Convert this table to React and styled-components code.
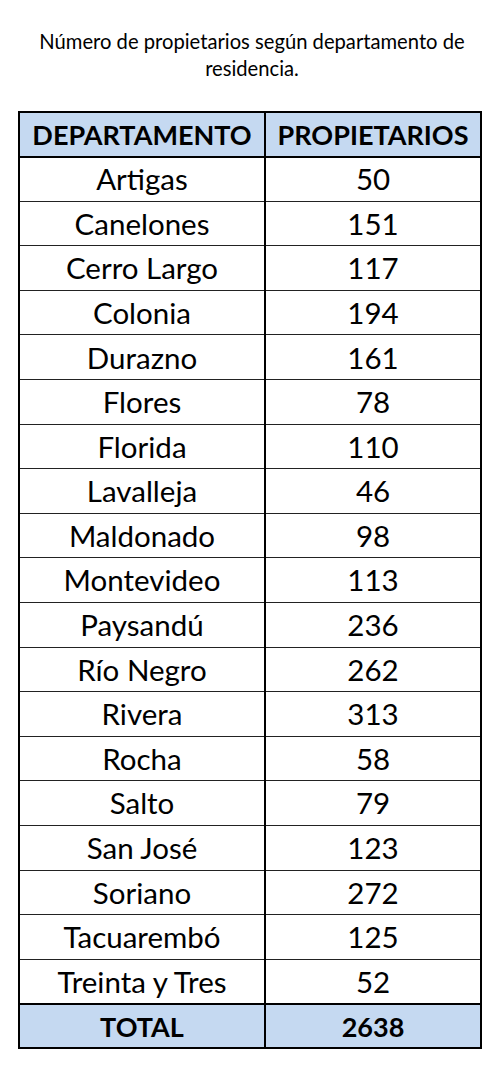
import React from 'react';
import styled, { createGlobalStyle } from 'styled-components';

const rows = [
  ['Artigas', 50],
  ['Canelones', 151],
  ['Cerro Largo', 117],
  ['Colonia', 194],
  ['Durazno', 161],
  ['Flores', 78],
  ['Florida', 110],
  ['Lavalleja', 46],
  ['Maldonado', 98],
  ['Montevideo', 113],
  ['Paysandú', 236],
  ['Río Negro', 262],
  ['Rivera', 313],
  ['Rocha', 58],
  ['Salto', 79],
  ['San José', 123],
  ['Soriano', 272],
  ['Tacuarembó', 125],
  ['Treinta y Tres', 52],
];

const GlobalStyle = createGlobalStyle`
  body {
    margin: 0;
    background: #ffffff;
    font-family: Lato, "Open Sans", sans-serif;
    color: #000;
  }
`;

const App = () => {
  return (
    <Page>
      <GlobalStyle />
      <Caption>
        Número de propietarios según departamento de
        <br />
        residencia.
      </Caption>
      <Table>
        <colgroup>
          <col style={{ width: 246 }} />
          <col style={{ width: 216 }} />
        </colgroup>
        <thead>
          <tr>
            <HeadCell>DEPARTAMENTO</HeadCell>
            <HeadCell>PROPIETARIOS</HeadCell>
          </tr>
        </thead>
        <tbody>
          {rows.map(([name, count]) => (
            <tr key={name}>
              <Cell>{name}</Cell>
              <Cell>{count}</Cell>
            </tr>
          ))}
        </tbody>
        <tfoot>
          <tr>
            <HeadCell>TOTAL</HeadCell>
            <HeadCell>2638</HeadCell>
          </tr>
        </tfoot>
      </Table>
    </Page>
  );
};

export default App;

const Page = styled.div`
  width: 504px;
  padding: 28px 0 20px 18px;
  box-sizing: border-box;
`;

const Caption = styled.p`
  width: 468px;
  margin: 0 0 29px;
  text-align: center;
  font-size: 20.2px;
  line-height: 27px;
`;

const Table = styled.table`
  width: 464px;
  border-collapse: collapse;
  table-layout: fixed;
  border: 2px solid #000;
`;

const Cell = styled.td`
  height: 44.6px;
  padding: 0;
  box-sizing: border-box;
  border: 1px solid #222;
  border-left: 2px solid #000;
  text-align: center;
  vertical-align: middle;
  font-size: 29.5px;
  line-height: 1;
`;

const HeadCell = styled(Cell)`
  background: #c5d9f1;
  font-weight: 700;
  font-size: 27px;
  border-top: 2px solid #000;
  border-bottom: 2px solid #000;
`;
